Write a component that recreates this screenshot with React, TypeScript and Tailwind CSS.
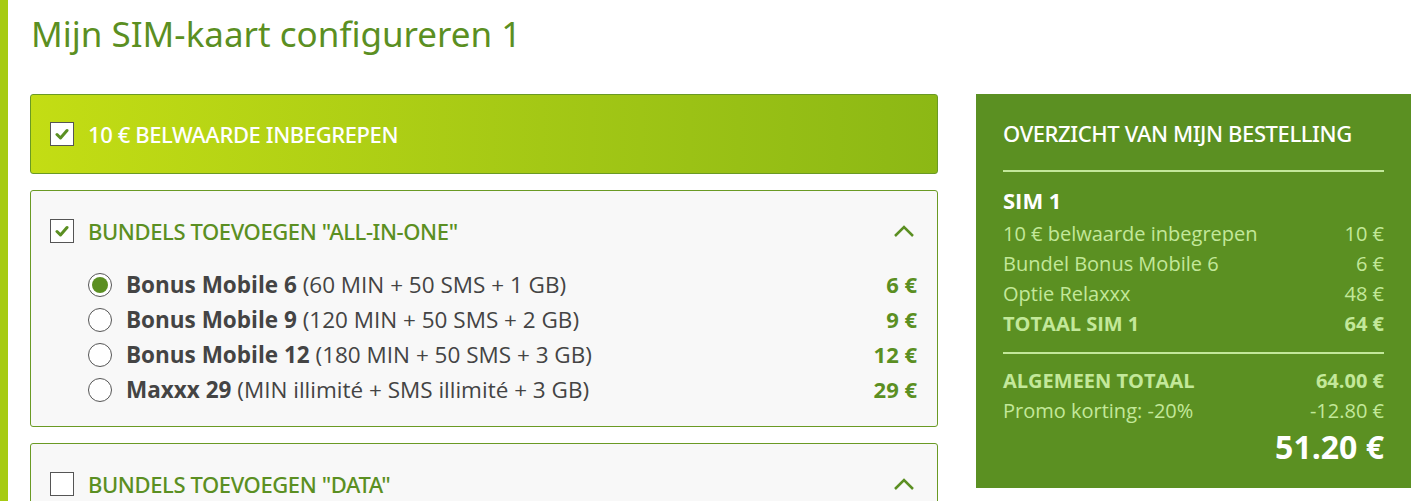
import React from 'react';

const options = [
    { name: 'Bonus Mobile 6', detail: '(60 MIN + 50 SMS + 1 GB)', price: '6 €', checked: true },
    { name: 'Bonus Mobile 9', detail: '(120 MIN + 50 SMS + 2 GB)', price: '9 €', checked: false },
    { name: 'Bonus Mobile 12', detail: '(180 MIN + 50 SMS + 3 GB)', price: '12 €', checked: false },
    { name: 'Maxxx 29', detail: '(MIN illimité + SMS illimité + 3 GB)', price: '29 €', checked: false },
];

const lines = [
    { label: '10 € belwaarde inbegrepen', value: '10 €' },
    { label: 'Bundel Bonus Mobile 6', value: '6 €' },
    { label: 'Optie Relaxxx', value: '48 €' },
];

const headFont = { fontFamily: '"Noto Sans", sans-serif' };

function CheckBox({ checked }: { checked: boolean }) {
    return (
        <div className="w-6 h-6 bg-white border border-[#555] flex items-center justify-center flex-shrink-0">
            {checked && (
                <svg width="14" height="12" viewBox="0 0 14 12">
                    <path d="M2 6.5 L5.5 10 L12 2.5" fill="none" stroke="#5b8f22" strokeWidth="3" strokeLinecap="round" strokeLinejoin="round" />
                </svg>
            )}
        </div>
    );
}

function Chevron() {
    return (
        <svg width="24" height="16" viewBox="0 0 24 16" className="flex-shrink-0">
            <path d="M3 13 L12 4 L21 13" fill="none" stroke="#5b8f22" strokeWidth="2.5" />
        </svg>
    );
}

function Radio({ checked }: { checked: boolean }) {
    return (
        <div className="w-6 h-6 rounded-full border border-[#555] bg-white flex items-center justify-center flex-shrink-0">
            {checked && <div className="w-4 h-4 rounded-full bg-[#5b8f22]" />}
        </div>
    );
}

export default function App() {
    return (
        <div className="w-[1422px] h-[501px] overflow-hidden bg-white flex" style={{ fontFamily: '"Open Sans", sans-serif' }}>
            <div className="w-2 h-full bg-[#a6cb12] flex-shrink-0" />
            <div className="flex-1 pl-[22px]">
                <h1 className="text-[35px] leading-none text-[#5b8f22] pt-[16px] pl-[1px] h-[94px]" style={headFont}>
                    Mijn SIM-kaart configureren 1
                </h1>
                <div className="flex gap-[38px] items-start">
                    {/* Left column */}
                    <div className="w-[908px] flex flex-col gap-[16px] flex-shrink-0">
                        <div className="h-[80px] rounded-[3px] border border-[#6a9a24] bg-gradient-to-r from-[#c3dd14] to-[#8cb815] flex items-center gap-[14px] px-[19px]">
                            <CheckBox checked />
                            <span className="text-white text-[22px] font-medium tracking-[-0.4px]" style={headFont}>10 € BELWAARDE INBEGREPEN</span>
                        </div>

                        <div className="rounded-[3px] border border-[#6a9a24] bg-[#f8f8f8] pb-[19px]">
                            <div className="h-[80px] flex items-center gap-[14px] px-[19px]">
                                <CheckBox checked />
                                <span className="flex-1 text-[#5b8f22] text-[22px] font-medium tracking-[-0.4px]" style={headFont}>BUNDELS TOEVOEGEN "ALL-IN-ONE"</span>
                                <div className="pr-[2px]"><Chevron /></div>
                            </div>
                            <div className="flex flex-col pl-[57px] pr-[20px] -mt-[4px]">
                                {options.map((o) => (
                                    <div key={o.name} className="h-[35px] flex items-center gap-[14px]">
                                        <Radio checked={o.checked} />
                                        <span className="flex-1 text-[22.5px] text-[#444]">
                                            <b className="font-bold">{o.name}</b> {o.detail}
                                        </span>
                                        <span className="text-[22px] font-bold text-[#5b8f22]">{o.price}</span>
                                    </div>
                                ))}
                            </div>
                        </div>

                        <div className="rounded-[3px] border border-[#6a9a24] bg-[#f8f8f8] h-[120px]">
                            <div className="h-[80px] flex items-center gap-[14px] px-[19px]">
                                <CheckBox checked={false} />
                                <span className="flex-1 text-[#5b8f22] text-[22px] font-medium tracking-[-0.4px]" style={headFont}>BUNDELS TOEVOEGEN "DATA"</span>
                                <div className="pr-[2px]"><Chevron /></div>
                            </div>
                        </div>
                    </div>

                    {/* Right column: order summary */}
                    <div className="w-[435px] h-[394px] flex-shrink-0 bg-[#5b9022] px-[27px] pt-[24px]">
                        <div className="text-white text-[22px] font-medium tracking-[-0.4px] leading-[30px]" style={headFont}>OVERZICHT VAN MIJN BESTELLING</div>
                        <div className="h-[2px] bg-[#c3e89a] mt-[22px] mb-[13px]" />
                        <div className="text-white font-bold text-[22px] leading-[30px] mb-[4px]">SIM 1</div>
                        <div className="text-[#c3e89a] text-[20px]">
                            {lines.map((l) => (
                                <div key={l.label} className="flex justify-between h-[30px] items-center">
                                    <span>{l.label}</span>
                                    <span>{l.value}</span>
                                </div>
                            ))}
                            <div className="flex justify-between h-[30px] items-center font-bold">
                                <span>TOTAAL SIM 1</span>
                                <span>64 €</span>
                            </div>
                        </div>
                        <div className="h-[2px] bg-[#c3e89a] mt-[13px] mb-[12px]" />
                        <div className="text-[#c3e89a] text-[20px]">
                            <div className="flex justify-between h-[30px] items-center font-bold">
                                <span>ALGEMEEN TOTAAL</span>
                                <span>64.00 €</span>
                            </div>
                            <div className="flex justify-between h-[30px] items-center">
                                <span>Promo korting: -20%</span>
                                <span>-12.80 €</span>
                            </div>
                        </div>
                        <div className="text-right text-white font-bold text-[32px] leading-[40px] mt-[1px]">51.20 €</div>
                    </div>
                </div>
            </div>
        </div>
    );
}
